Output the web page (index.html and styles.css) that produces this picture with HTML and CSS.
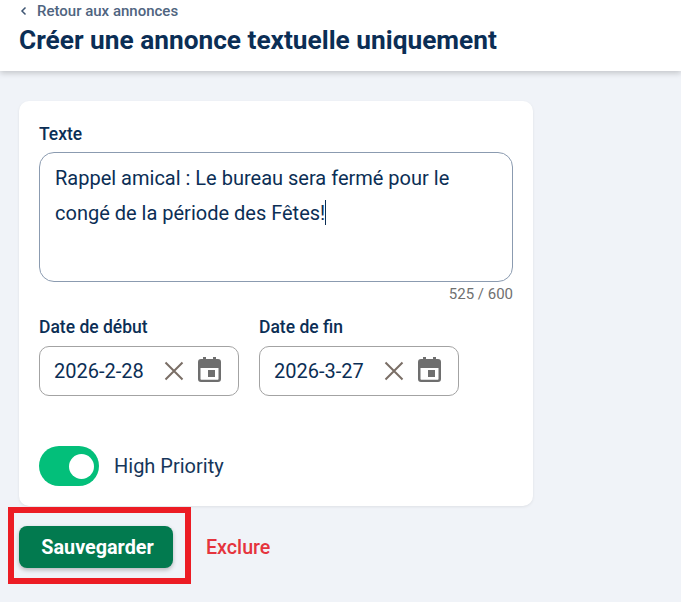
FILE: index.html
```html
<!DOCTYPE html>
<html lang="fr">
<head>
    <meta charset="UTF-8">
    <title>Créer une annonce textuelle uniquement</title>
    <link rel="stylesheet" href="styles.css">
</head>
<body>
<header class="page-header">
    <a class="back-link" href="#">
        <svg class="back-icon" width="10" height="10" viewBox="0 0 10 10"><path d="M6.500 1.500 3 5l3.500 3.500" fill="none" stroke="#3f5673" stroke-width="1.500"/></svg>
        Retour aux annonces
    </a>
    <h1>Créer une annonce textuelle uniquement</h1>
</header>

<main class="content">
    <div class="card">
        <div class="label">Texte</div>
        <div class="textarea">
            <div>Rappel amical : Le bureau sera fermé pour le</div>
            <div>congé de la période des Fêtes!<span class="caret"></span></div>
        </div>
        <div class="counter">525 / 600</div>

        <div class="dates">
            <div class="date-field">
                <div class="label">Date de début</div>
                <div class="date-input">
                    <span class="date-value">2026-2-28</span>
                    <svg class="icon-clear" width="20" height="20" viewBox="0 0 20 20"><path d="M1.500 1.500l17 17M18.500 1.500l-17 17" stroke="#7a6e66" stroke-width="2" fill="none"/></svg>
                    <svg class="icon-cal" width="23" height="25" viewBox="0 0 23 25"><path fill="#6e6e6e" d="M5 0h3v2h7V0h3v2h2a3 3 0 0 1 3 3v17a3 3 0 0 1-3 3H3a3 3 0 0 1-3-3V5a3 3 0 0 1 3-3h2zM2.500 11v11c0 .4.300.7.700.7h16.600c.4 0 .7-.3.700-.7V11zM10 13h7v7h-7z"/></svg>
                </div>
            </div>
            <div class="date-field">
                <div class="label">Date de fin</div>
                <div class="date-input">
                    <span class="date-value">2026-3-27</span>
                    <svg class="icon-clear" width="20" height="20" viewBox="0 0 20 20"><path d="M1.500 1.500l17 17M18.500 1.500l-17 17" stroke="#7a6e66" stroke-width="2" fill="none"/></svg>
                    <svg class="icon-cal" width="23" height="25" viewBox="0 0 23 25"><path fill="#6e6e6e" d="M5 0h3v2h7V0h3v2h2a3 3 0 0 1 3 3v17a3 3 0 0 1-3 3H3a3 3 0 0 1-3-3V5a3 3 0 0 1 3-3h2zM2.500 11v11c0 .4.300.7.700.7h16.600c.4 0 .7-.3.700-.7V11zM10 13h7v7h-7z"/></svg>
                </div>
            </div>
        </div>

        <div class="priority">
            <span class="toggle"><span class="toggle-knob"></span></span>
            <span class="priority-label">High Priority</span>
        </div>
    </div>

    <div class="actions">
        <button class="save-btn" type="button">Sauvegarder</button>
        <a class="exclude-link" href="#">Exclure</a>
        <div class="highlight"></div>
    </div>
</main>
</body>
</html>
```

FILE: styles.css
```css
html, body {
    margin: 0;
    padding: 0;
}
body {
    font-family: Roboto, "Liberation Sans", sans-serif;
    background-color: #f0f3f8;
    color: #0b2e55;
    height: 602px;
    overflow: hidden;
}
.page-header {
    height: 71px;
    box-sizing: border-box;
    padding: 2px 19px 0;
    background-color: white;
    box-shadow: 0 2px 6px rgba(0,0,0,0.2);
}
.back-link {
    display: flex;
    align-items: center;
    gap: 8px;
    height: 18px;
    font-size: 15px;
    font-weight: 500;
    color: #4f6480;
    text-decoration: none;
}
.back-icon {
    display: block;
}
h1 {
    margin: 3px 0 0;
    font-size: 26.250px;
    line-height: 34px;
    font-weight: 700;
    color: #0b2e55;
}
.content {
    padding: 30px 19px 0;
}
.card {
    width: 514px;
    height: 405px;
    box-sizing: border-box;
    padding: 23px 20px 0;
    background-color: white;
    border-radius: 10px;
    box-shadow: 0 1px 3px rgba(0,0,0,0.08);
}
.label {
    font-size: 17.500px;
    font-weight: 500;
    line-height: 20px;
    margin-bottom: 8px;
}
.textarea {
    height: 130px;
    box-sizing: border-box;
    padding: 8px 15px;
    border: 1px solid #8b9bb0;
    border-radius: 15px;
    font-size: 20px;
    line-height: 35px;
}
.caret {
    display: inline-block;
    width: 1px;
    height: 25px;
    vertical-align: -5px;
    background-color: #0b2e55;
}
.counter {
    margin-top: 4px;
    font-size: 15px;
    line-height: 16px;
    text-align: right;
    color: #707070;
}
.dates {
    display: flex;
    gap: 20px;
    margin-top: 15px;
}
.date-field .label {
    margin-bottom: 9px;
}
.date-input {
    display: flex;
    align-items: center;
    width: 200px;
    height: 50px;
    box-sizing: border-box;
    padding-left: 14px;
    border: 1px solid #a3a3a3;
    border-radius: 10px;
}
.date-value {
    width: 110px;
    font-size: 20px;
}
.icon-clear {
    margin-right: 14px;
}
.icon-cal {
    margin-bottom: 3px;
}
.priority {
    display: flex;
    align-items: center;
    gap: 15px;
    margin-top: 50px;
}
.toggle {
    display: flex;
    justify-content: flex-end;
    align-items: center;
    width: 60px;
    height: 40px;
    box-sizing: border-box;
    padding-right: 5px;
    background-color: #03bf7a;
    border-radius: 20px;
}
.toggle-knob {
    width: 25px;
    height: 25px;
    background-color: white;
    border-radius: 50%;
}
.priority-label {
    font-size: 20px;
    color: #16365a;
}
.actions {
    position: relative;
    display: flex;
    align-items: center;
    gap: 33px;
    margin-top: 20px;
}
.save-btn {
    width: 154px;
    height: 42px;
    padding: 0 0 0 3px;
    border: none;
    border-radius: 8px;
    background-color: #027a4f;
    color: white;
    font-family: inherit;
    font-size: 19.800px;
    font-weight: 700;
    box-shadow: 0 2px 4px rgba(0,0,0,0.25);
}
.exclude-link {
    font-size: 19.700px;
    font-weight: 500;
    color: #e5343d;
    text-decoration: none;
}
.highlight {
    position: absolute;
    left: -11px;
    top: -19px;
    width: 171px;
    height: 65px;
    border: 6px solid #ec1c24;
}
```
